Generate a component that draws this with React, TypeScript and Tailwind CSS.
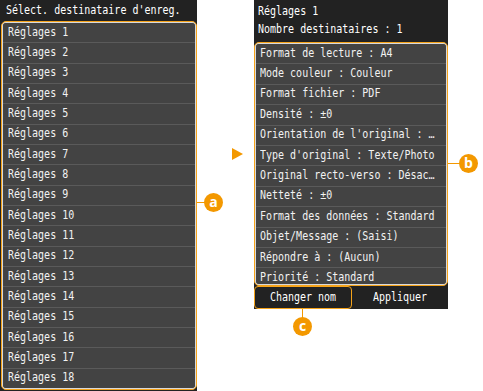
import React from "react";

const mono = "font-['DejaVu_Sans_Mono','Liberation_Mono',monospace] text-[10px] text-[#f2f2f2]";

const Label: React.FC<{ text: string; className?: string }> = ({ text, className }) => (
    <span className={"block origin-left scale-y-[1.15] whitespace-pre leading-none " + (className || "")}>{text}</span>
);

const Callout: React.FC<{ letter: string }> = ({ letter }) => (
    <div className="w-[19px] h-[19px] rounded-full bg-[#f39800] flex items-center justify-center text-white text-[14px] font-bold font-['Open_Sans',sans-serif] leading-none pb-[2px]">
        {letter}
    </div>
);

const left = Array.from({ length: 18 }, (_, i) => `Réglages ${i + 1}`);

const right = [
    "Format de lecture : A4",
    "Mode couleur : Couleur",
    "Format fichier : PDF",
    "Densité : ±0",
    "Orientation de l'original : …",
    "Type d'original : Texte/Photo",
    "Original recto-verso : Désac…",
    "Netteté : ±0",
    "Format des données : Standard",
    "Objet/Message : (Saisi)",
    "Répondre à : (Aucun)",
    "Priorité : Standard",
];

const App: React.FC = () => {
    return (
        <div className={"flex w-[483px] h-[391px] bg-white overflow-hidden " + mono}>
            {/* left screen */}
            <div className="w-[197px] h-full bg-[#222222] flex flex-col">
                <div className="h-[21px] px-[6px] flex items-center">
                    <Label text="Sélect. destinataire d'enreg." className="text-white" />
                </div>
                <div className="flex-1 mb-[1px] ml-[1px] border border-[#f5a31a] rounded-[5px] p-px bg-[#d9d9d9]">
                    <div className="h-full rounded-[3px] overflow-hidden bg-[#5a5a5a] grid grid-rows-[repeat(18,minmax(0,1fr))] gap-px">
                        {left.map((t) => (
                            <div key={t} className="bg-[#434343] flex items-center px-[5px]">
                                <Label text={t} />
                            </div>
                        ))}
                    </div>
                </div>
            </div>

            {/* callout a + arrow */}
            <div className="relative w-[57px] h-full">
                <div className="absolute left-0 top-[202px] w-[8px] h-px bg-[#f39800]" />
                <div className="absolute left-[7px] top-[193px]">
                    <Callout letter="a" />
                </div>
                <div className="absolute left-[35px] top-[148px] w-0 h-0 border-y-[6px] border-y-transparent border-l-[11px] border-l-[#f39800]" />
            </div>

            {/* right screen */}
            <div className="w-[194px] flex flex-col">
                <div className="bg-[#222222] h-[309px] flex flex-col">
                    <div className="h-[42px] px-[4px] flex flex-col justify-center gap-[8px]">
                        <Label text="Réglages 1" className="text-white" />
                        <Label text="Nombre destinataires : 1" className="text-white" />
                    </div>
                    <div className="h-[244px] border border-[#f5a31a] rounded-[5px] p-px bg-[#d9d9d9]">
                        <div className="h-full rounded-[3px] overflow-hidden bg-[#5a5a5a] flex flex-col gap-px">
                            {right.map((t) => (
                                <div key={t} className="h-[19.4px] shrink-0 bg-[#434343] flex items-center px-[4px]">
                                    <Label text={t} />
                                </div>
                            ))}
                        </div>
                    </div>
                    <div className="flex h-[23px]">
                        <div className="w-[98px] border border-[#f5a31a] rounded-[4px] flex items-center justify-center">
                            <Label text="Changer nom" className="text-white" />
                        </div>
                        <div className="flex-1 flex items-center justify-center">
                            <Label text="Appliquer" className="text-white" />
                        </div>
                    </div>
                </div>
                <div className="relative flex-1">
                    <div className="absolute left-[48px] top-0 w-px h-[9px] bg-[#f39800]" />
                    <div className="absolute left-[39px] top-[8px]">
                        <Callout letter="c" />
                    </div>
                </div>
            </div>

            {/* callout b */}
            <div className="relative flex-1 h-full">
                <div className="absolute left-0 top-[163px] w-[13px] h-px bg-[#f39800]" />
                <div className="absolute left-[11px] top-[154px]">
                    <Callout letter="b" />
                </div>
            </div>
        </div>
    );
};

export default App;
